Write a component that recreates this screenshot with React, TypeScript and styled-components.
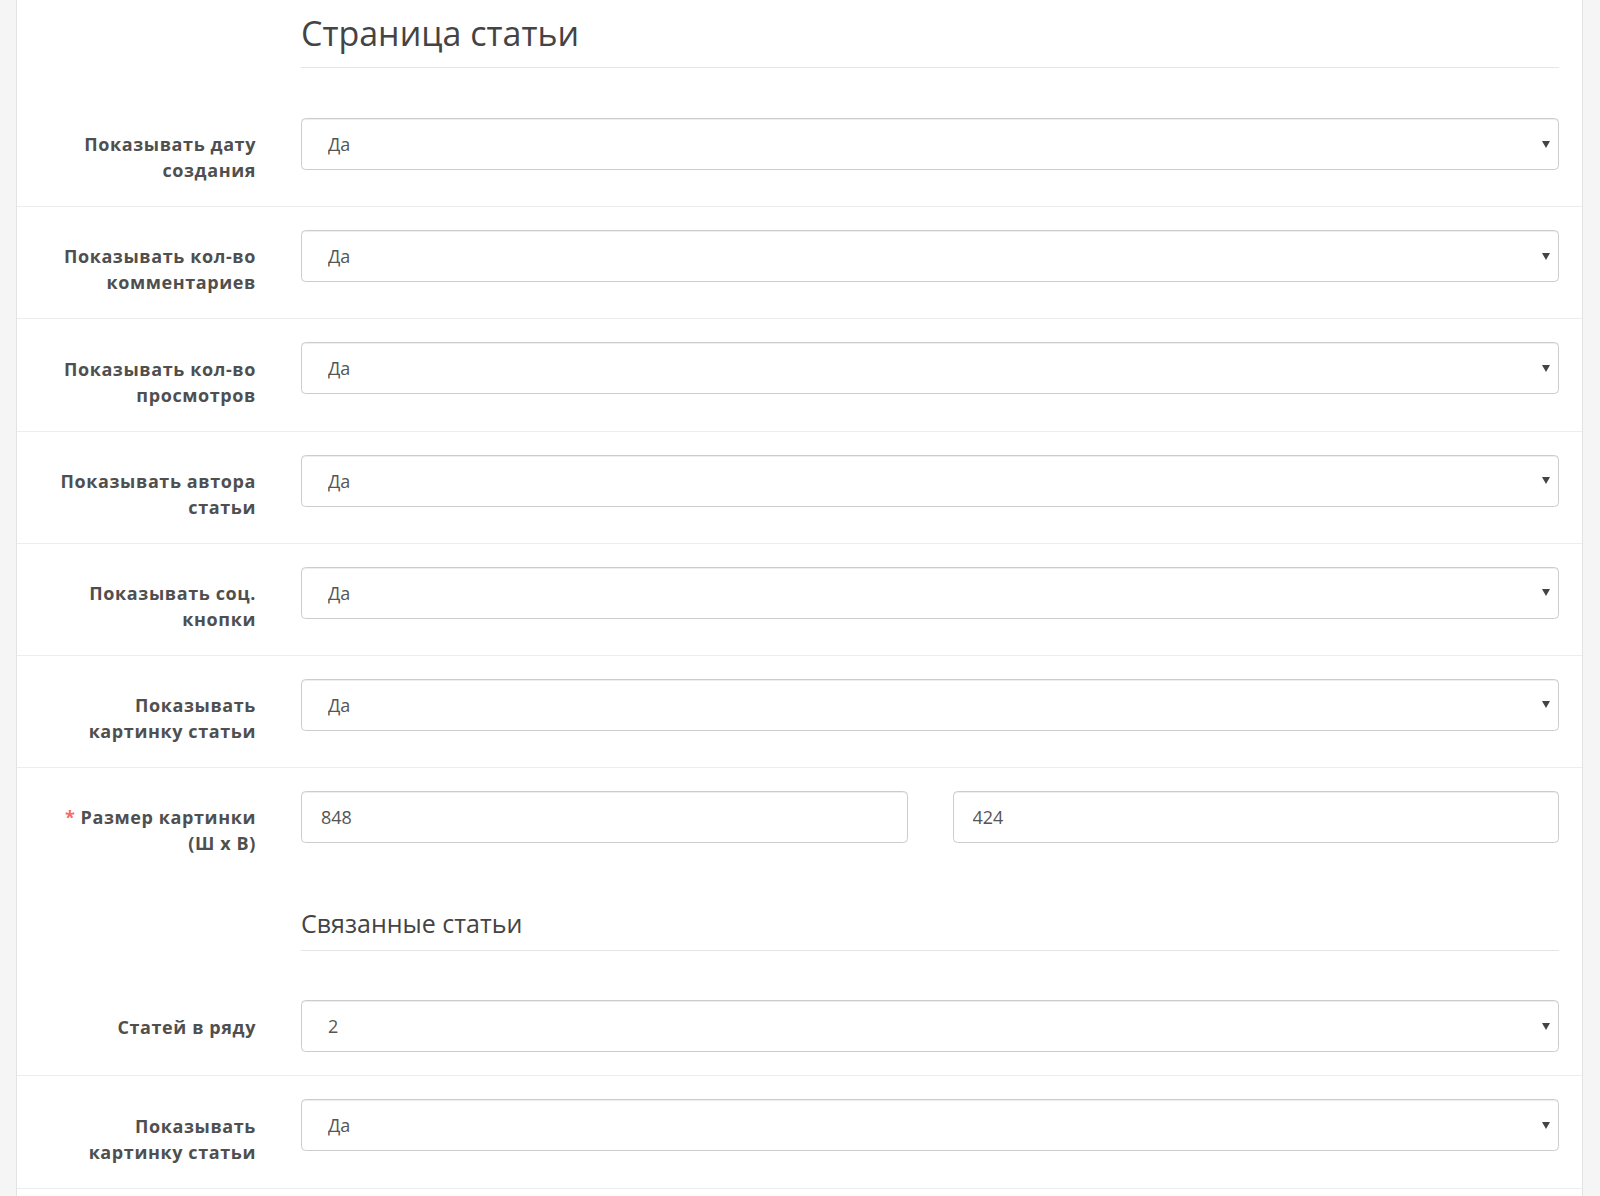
import React from 'react';
import styled, { createGlobalStyle } from 'styled-components';

const GlobalStyle = createGlobalStyle`
  html, body {
    margin: 0;
    padding: 0;
    background: #f5f5f5;
  }
  body {
    font-family: "Open Sans", "Liberation Sans", sans-serif;
  }
  *, *::before, *::after {
    box-sizing: border-box;
  }
`;

const Panel = styled.div`
  margin: 0 17px 0 16px;
  background: #fff;
  border-left: 1px solid #e3e3e3;
  border-right: 1px solid #e3e3e3;
  min-height: 100vh;
  padding-bottom: 40px;
`;

const Form = styled.form`
  display: flex;
  flex-direction: column;
`;

const LegendRow = styled.div<{ $gap: number }>`
  display: grid;
  grid-template-columns: 216px 1fr;
  column-gap: 45px;
  padding: 0 23px;
  margin-bottom: ${(p) => p.$gap}px;
`;

const Legend = styled.h2<{ $size: 'lg' | 'md' }>`
  grid-column: 2;
  margin: 0;
  font-weight: 400;
  color: #444;
  border-bottom: 1px solid #e5e5e5;
  font-size: ${(p) => (p.$size === 'lg' ? '34px' : '25px')};
  line-height: ${(p) => (p.$size === 'lg' ? '40px' : '26px')};
  padding: ${(p) => (p.$size === 'lg' ? '13px 0 14px' : '31px 0 14px')};
`;

const Row = styled.div<{ $divider?: boolean }>`
  display: grid;
  grid-template-columns: 216px 1fr;
  column-gap: 45px;
  align-items: start;
  padding: 23px;
  border-top: ${(p) => (p.$divider ? '1px solid #ededed' : '0')};
`;

const Label = styled.label`
  display: block;
  text-align: right;
  font-weight: 700;
  font-size: 18px;
  letter-spacing: 0.6px;
  line-height: 26px;
  color: #4f4f4f;
  padding-top: 13.2px;
`;

const Required = styled.span`
  color: #f56b6b;
`;

const SelectWrap = styled.div`
  position: relative;
  &::after {
    content: '';
    position: absolute;
    right: 9.5px;
    top: 50%;
    margin-top: -3.5px;
    border-left: 4px solid transparent;
    border-right: 4px solid transparent;
    border-top: 7px solid #444;
    pointer-events: none;
  }
`;

const controlBase = `
  display: block;
  width: 100%;
  height: 52px;
  font-family: "Open Sans", "Liberation Sans", sans-serif;
  font-size: 18px;
  color: #555;
  background: #fff;
  border: 1px solid #ccc;
  border-radius: 4.5px;
  box-shadow: inset 0 1px 1px rgba(0, 0, 0, 0.075);
  outline: none;
  margin: 0;
`;

const Select = styled.select`
  ${controlBase}
  appearance: none;
  -webkit-appearance: none;
  padding: 0 30px 0 26px;
`;

const Input = styled.input`
  ${controlBase}
  padding: 0 19px;
`;

const Pair = styled.div`
  display: grid;
  grid-template-columns: 1fr 1fr;
  column-gap: 45px;
`;

type SelectRowProps = {
  label: React.ReactNode;
  value: string;
  options: string[];
  divider?: boolean;
  id: string;
};

const SelectRow = ({ label, value, options, divider, id }: SelectRowProps) => (
  <Row $divider={divider}>
    <Label htmlFor={id}>{label}</Label>
    <SelectWrap>
      <Select id={id} defaultValue={value}>
        {options.map((o) => (
          <option key={o} value={o}>
            {o}
          </option>
        ))}
      </Select>
    </SelectWrap>
  </Row>
);

const yesNo = ['Да', 'Нет'];

export default function App() {
  return (
    <>
      <GlobalStyle />
      <Panel>
        <Form onSubmit={(e) => e.preventDefault()}>
          <LegendRow $gap={27}>
            <Legend $size="lg">Страница статьи</Legend>
          </LegendRow>
          <SelectRow id="date" label="Показывать дату создания" value="Да" options={yesNo} />
          <SelectRow id="comments" label="Показывать кол-во комментариев" value="Да" options={yesNo} divider />
          <SelectRow id="views" label="Показывать кол-во просмотров" value="Да" options={yesNo} divider />
          <SelectRow id="author" label="Показывать автора статьи" value="Да" options={yesNo} divider />
          <SelectRow id="social" label="Показывать соц. кнопки" value="Да" options={yesNo} divider />
          <SelectRow id="image" label="Показывать картинку статьи" value="Да" options={yesNo} divider />
          <Row $divider>
            <Label htmlFor="img-w">
              <Required>* </Required>Размер картинки {'(Ш\u00a0x\u00a0В)'}
            </Label>
            <Pair>
              <Input id="img-w" type="text" defaultValue="848" />
              <Input id="img-h" type="text" defaultValue="424" />
            </Pair>
          </Row>
          <LegendRow $gap={26}>
            <Legend $size="md">Связанные статьи</Legend>
          </LegendRow>
          <SelectRow id="per-row" label="Статей в ряду" value="2" options={['1', '2', '3', '4']} />
          <SelectRow id="rel-image" label="Показывать картинку статьи" value="Да" options={yesNo} divider />
          <Row $divider />
        </Form>
      </Panel>
    </>
  );
}
